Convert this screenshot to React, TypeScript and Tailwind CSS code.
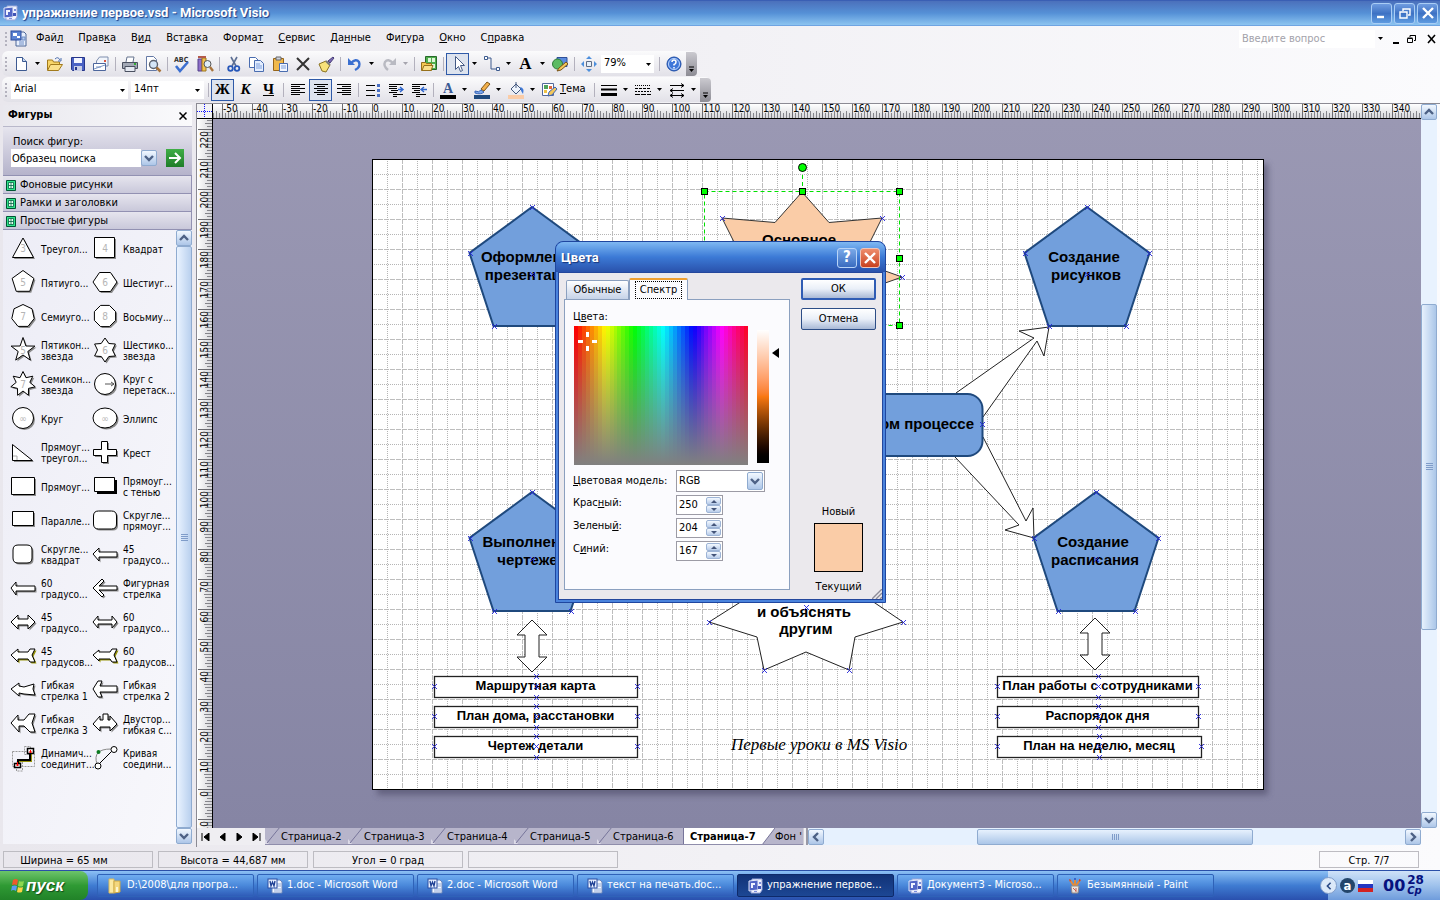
import React from 'react';

/* ---------- small helpers ---------- */

// "Фай_л" -> underline the letter after the underscore
const Hot = ({ t }: { t: string }) => {
  const i = t.indexOf('_');
  if (i < 0) return <>{t}</>;
  return (
    <span>
      {t.slice(0, i)}
      <u className="underline-offset-1">{t[i + 1]}</u>
      {t.slice(i + 2)}
    </span>
  );
};

const Grip = () => (
  <span className="flex w-[9px] shrink-0 flex-col items-center gap-[2px] pl-[2px]">
    {[0, 1, 2, 3].map((n) => (
      <i key={n} className="h-[2px] w-[2px] bg-[#b4b2be]" />
    ))}
  </span>
);

const Sep = () => (
  <span className="flex w-[6px] shrink-0 justify-center">
    <i className="h-[14px] w-px bg-[#b3b1bd]" />
  </span>
);

const Drop = ({ label, off }: { label: string; off?: boolean }) => (
  <button aria-label={label} className="flex h-[22px] w-[11px] shrink-0 items-center justify-center">
    <svg width="5" height="3" viewBox="0 0 5 3">
      <path d="M0 0h5L2.5 3z" fill={off ? '#a5a4ad' : '#000'} />
    </svg>
  </button>
);

const Chevron = ({ dir = 'down' }: { dir?: 'down' | 'up' | 'left' | 'right' }) => {
  const d = {
    down: 'M1 3l4 4 4-4',
    up: 'M1 7l4-4 4 4',
    left: 'M7 1L3 5l4 4',
    right: 'M3 1l4 4-4 4',
  }[dir];
  return (
    <svg width="10" height="10" viewBox="0 0 10 10" fill="none" stroke="#4d6185" strokeWidth="2.4">
      <path d={d} />
    </svg>
  );
};

const ScrollButton = ({ dir }: { dir: 'down' | 'up' | 'left' | 'right' }) => (
  <button
    aria-label={'Прокрутка ' + dir}
    className="flex h-[16px] w-[16px] shrink-0 items-center justify-center rounded-xs border border-[#8fabd0] bg-linear-to-b from-[#f2f8ff] to-[#adc6e8]"
  >
    <Chevron dir={dir} />
  </button>
);

const Tool = ({ label, on, children }: { label: string; on?: boolean; children: React.ReactNode }) => (
  <button
    aria-label={label}
    className={
      'flex h-[22px] w-[23px] shrink-0 items-center justify-center ' +
      (on ? 'border border-[#2f5aa8] bg-[#dde3ee]' : '')
    }
  >
    {children}
  </button>
);

const I = ({ children, s = 18 }: { children: React.ReactNode; s?: number }) => (
  <svg width={s} height={s} viewBox="0 0 18 18" fill="none">
    {children}
  </svg>
);

/* ---------- application icons ---------- */

const VisioIcon = () => (
  <svg width="16" height="16" viewBox="0 0 16 16" className="shrink-0">
    <path d="M5 1h10v11l-2 3H4z" fill="#f3f5fd" stroke="#9aa7da" />
    <path d="M2 3l9-1v10l-9 1z" fill="#5165c6" stroke="#e3e8fb" />
    <path d="M4 5h4v5H4z" fill="#eef1ff" />
    <path d="M6 7h3v3H6z" fill="#5165c6" />
    <path d="M11 8h3v3h-3z" fill="#4053b5" />
    <path d="M12 4h2v2h-2zM7 13h3v1H7z" fill="#7e8edb" />
  </svg>
);

const WordIcon = () => (
  <svg width="16" height="16" viewBox="0 0 16 16" className="shrink-0">
    <path d="M5 2h8l2 2v11H5z" fill="#f4f8ff" stroke="#6b87bd" />
    <path d="M10 6h4M10 8h4M7 11h7M7 13h7" stroke="#8fa9d8" />
    <rect x="1" y="1" width="9" height="9" fill="#e9f0ff" stroke="#2a4fa3" />
    <path d="M3 3l1 5 1.500-4L7 8l1-5" stroke="#1d3f94" strokeWidth="1.300" fill="none" />
  </svg>
);

const FolderIcon = () => (
  <svg width="16" height="16" viewBox="0 0 16 16" className="shrink-0">
    <path d="M2 1h5v14H2z" fill="#fbe9a2" stroke="#d9b95a" />
    <path d="M7 3h6v11l-6 1z" fill="#f3d77e" stroke="#cfaa45" />
    <path d="M9 9h2v5H9z" fill="#fdf6d0" />
  </svg>
);

const PaintIcon = () => (
  <svg width="16" height="16" viewBox="0 0 16 16" className="shrink-0">
    <path d="M7 8L3 2M8 8V1M9 8l4-6" stroke="#e08b3d" strokeWidth="2" />
    <path d="M2 1l2 1-1 2zM12 1l2 1-2 2z" fill="#d0402e" />
    <path d="M7 0h2v2H7z" fill="#3a65c9" />
    <path d="M4 8h8l-1 7H5z" fill="#e9e4e0" stroke="#938b86" />
    <path d="M6 10l3 3M9 10v4" stroke="#c65b4d" />
  </svg>
);

/* ---------- data ---------- */

const menu = ['Фай_л', 'Прав_ка', 'В_ид', 'Вст_авка', 'Форма_т', '_Сервис', 'Да_нные', 'Фи_гура', '_Окно', 'С_правка'];

const poly = (n: number, r: number, turn = -90, cx = 13, cy = 13) =>
  'M' +
  Array.from({ length: n }, (_, i) => {
    const a = ((turn + (360 / n) * i) * Math.PI) / 180;
    return `${(cx + r * Math.cos(a)).toFixed(1)} ${(cy + r * Math.sin(a)).toFixed(1)}`;
  }).join('L') +
  'z';

const star = (n: number, r: number, q: number) =>
  'M' +
  Array.from({ length: n * 2 }, (_, i) => {
    const a = ((-90 + (180 / n) * i) * Math.PI) / 180;
    const k = i % 2 ? q : r;
    return `${(13 + k * Math.cos(a)).toFixed(1)} ${(13 + k * Math.sin(a)).toFixed(1)}`;
  }).join('L') +
  'z';

const circle = 'M2.500 13a10.500 10.500 0 1 0 21 0a10.500 10.500 0 1 0-21 0z';

interface Shape {
  name: string[];
  d: string;
  mark?: string;
  shadow?: string;
  extra?: React.ReactNode;
}

const shapes: Shape[] = [
  { name: ['Треугол...'], d: 'M13 3L23.500 22.500H2.500z', mark: '3' },
  { name: ['Квадрат'], d: 'M2.500 2.500h20v20h-20z', mark: '4' },
  { name: ['Пятиуго...'], d: poly(5, 11.5), mark: '5' },
  { name: ['Шестиуг...'], d: 'M7.500 3.500h11L25 13l-6.500 9.500h-11L1 13z', mark: '6' },
  { name: ['Семиуго...'], d: poly(7, 11.5), mark: '7' },
  { name: ['Восьмиу...'], d: poly(8, 11.5, 22.5), mark: '8' },
  { name: ['Пятикон...', 'звезда'], d: star(5, 12.5, 5), mark: '5' },
  { name: ['Шестико...', 'звезда'], d: star(6, 12, 7.5), mark: '6' },
  { name: ['Семикон...', 'звезда'], d: star(7, 12.5, 7), mark: '7' },
  { name: ['Круг с', 'перетаск...'], d: circle, extra: <path d="M13 13h9M19 11l3 2-3 2" stroke="#555" fill="none" /> },
  { name: ['Круг'], d: circle, mark: '∞' },
  { name: ['Эллипс'], d: 'M1 13a12 10 0 1 0 24 0a12 10 0 1 0-24 0z', mark: '∞' },
  { name: ['Прямоуг...', 'треугол...'], d: 'M2.500 5.500v16h20z', extra: <path d="M3 17h4v4" stroke="#aaa" fill="none" /> },
  { name: ['Крест'], d: 'M9.500 2.500h6v8h9v6h-9v7h-6v-7h-8v-6h8z' },
  { name: ['Прямоуг...'], d: 'M1.500 4.500h23v17h-23z' },
  { name: ['Прямоуг...', 'с тенью'], d: 'M2.500 4.500h20v14h-20z', shadow: '#000' },
  { name: ['Паралле...'], d: 'M2.500 4.500h21v14h-21z' },
  { name: ['Скругле...', 'прямоуг...'], d: 'M6.500 4h13q5 0 5 5v8q0 5-5 5h-13q-5 0-5-5v-8q0-5 5-5z' },
  { name: ['Скругле...', 'квадрат'], d: 'M8 4h9q5 0 5 5v8q0 5-5 5h-9q-5 0-5-5v-8q0-5 5-5z' },
  { name: ['45', 'градусо...'], d: 'M1 13l6-6v4h18v5H7v4z' },
  { name: ['60', 'градусо...'], d: 'M1 13l5-6v4h19v5H6v4z' },
  { name: ['Фигурная', 'стрелка'], d: 'M1 13l9-9 2 2-5 5h18v4H7l5 5-2 2z' },
  { name: ['45', 'градусо...'], d: 'M1 13l7-7v4h10V6l7 7-7 7v-4H8v4z' },
  { name: ['60', 'градусо...'], d: 'M1 13l5-6v4h14V7l5 6-5 6v-4H6v4z' },
  { name: ['45', 'градусов...'], d: 'M1 12l7-6v3h10l2-3h5l-3 6 3 7h-5l-2-3H8v3z', shadow: '#98950c' },
  { name: ['60', 'градусов...'], d: 'M1 12l6-5v2h11l2-3h5l-3 6 3 7h-5l-2-3H7v2z', shadow: '#98950c' },
  { name: ['Гибкая', 'стрелка 1'], d: 'M1 12l8-6v3l5 1 10-3-1 5 2 6-11-1-5-1v3z' },
  { name: ['Гибкая', 'стрелка 2'], d: 'M1 12l5-8h4l-2 5h17v6H8l2 5H6z' },
  { name: ['Гибкая', 'стрелка 3'], d: 'M1 12l7-8v5h6l5-6h6l-3 9 3 9h-5l-6-6H9v6z' },
  { name: ['Двустор...', 'гибкая с...'], d: 'M1 13l7-8v4h3V3h5v6h2V5l7 8-7 7v-4H8v4z' },
  {
    name: ['Динамич...', 'соединит...'],
    d: '',
    extra: (
      <>
        <path d="M2.500 6.500h22v15h-22zM14.500 1.500h6v8h-6zM6.500 17h6v9h-6z" fill="none" stroke="#999" strokeDasharray="2 1" />
        <path d="M9 20v-4h12V8" stroke="#98950c" strokeWidth="2" fill="none" />
        <path d="M8 19v-4h12V8" stroke="#000" strokeWidth="2" fill="none" />
        <path d="M17.500 3.500h6v5h-6zM4.500 18.500h6v4h-6z" fill="#fff" stroke="#000" strokeWidth="1.500" />
        <path d="M19 7h3M20.500 5v3M6 20h3M7.500 17v4" stroke="#f00" />
      </>
    ),
  },
  {
    name: ['Кривая', 'соедини...'],
    d: '',
    extra: (
      <>
        <path d="M5 19Q0 4 19 4" fill="none" stroke="#888" />
        <path d="M7 19L20 6" stroke="#000" />
        <circle cx="22" cy="4.500" r="3" fill="#fff" stroke="#000" />
        <circle cx="6" cy="21" r="3" fill="#fff" stroke="#000" />
        <circle cx="6.500" cy="7" r="2" fill="#0a7a20" />
      </>
    ),
  },
];

const ShapeIcon = ({ s }: { s: Shape }) => (
  <svg width="28" height="28" viewBox="0 0 28 28" className="shrink-0">
    {s.d && (
      <path
        d={s.d}
        transform={s.shadow === '#000' ? 'translate(2.500 2.500)' : 'translate(1.500 1.500)'}
        fill={s.shadow ?? '#8b8b8b'}
      />
    )}
    {s.d && <path d={s.d} fill="#fff" stroke="#000" />}
    {s.mark && (
      <text x="13" y="17" textAnchor="middle" fontSize="10" fill="#b5b5b5">
        {s.mark}
      </text>
    )}
    {s.extra}
  </svg>
);

/* ---------- bars ---------- */

const TitleBar = () => (
  <header className="flex h-[26px] shrink-0 items-center gap-[4px] border-t border-b border-t-[#3a5fb4] border-b-[#6fa4e2] bg-linear-to-b from-[#4b70bb] via-[#5590d6] to-[#8cc4f0] px-[2px]">
    <VisioIcon />
    <h1 className="flex-1 font-['Roboto',sans-serif] text-[13px] font-bold text-white [text-shadow:1px_1px_1px_#1c3c86]">
      упражнение первое.vsd - Microsoft Visio
    </h1>
    <div className="flex gap-[2px]">
      {['M4 13h7', 'M4 8h7v6H4zM7 7V5h7v6h-2', 'M4 4l10 10M14 4L4 14'].map((d, i) => (
        <button
          key={d}
          aria-label={['Свернуть', 'Восстановить', 'Закрыть'][i]}
          className="flex h-[21px] w-[21px] items-center justify-center rounded-[3px] border border-[#a9cdf5] bg-linear-to-b from-[#6f9ce0] via-[#3e72c4] to-[#5e9be0]"
        >
          <I>
            <path d={d} stroke="#fff" strokeWidth={i === 1 ? 1.4 : 2.4} />
          </I>
        </button>
      ))}
    </div>
  </header>
);

const MenuBar = () => (
  <nav className="flex h-[25px] shrink-0 items-center">
    <Grip />
    <span className="mr-px flex w-[19px] justify-center">
      <svg width="17" height="17" viewBox="0 0 17 17">
        <path d="M6 2h8l2 2v12H6z" fill="#e8effc" stroke="#4c6698" />
        <path d="M9 12h5M9 14h5M12 7h3v3h-3z" stroke="#6d8cc6" fill="#b9cdf0" />
        <rect x="1" y="1" width="10" height="9" fill="#5c83d3" stroke="#2c4d9c" />
        <path d="M3 3h4v3H3zM7 6h3v2H7z" fill="#fff" />
      </svg>
    </span>
    <div className="flex gap-px">
      {menu.map((m) => (
        <button key={m} className="px-[7px] whitespace-nowrap">
          <Hot t={m} />
        </button>
      ))}
    </div>
    <div className="ml-auto flex items-center">
      <input
        aria-label="Введите вопрос"
        placeholder="Введите вопрос"
        className="h-[18px] w-[136px] bg-white px-[3px] placeholder:text-[#a3a2aa]"
      />
      <Drop label="Вопросы" />
      <div className="flex gap-[4px] pl-[4px]">
        <button aria-label="Свернуть окно" className="w-[12px]">
          <svg width="12" height="10" viewBox="0 0 12 10"><path d="M3 9h6" stroke="#000" strokeWidth="2" /></svg>
        </button>
        <button aria-label="Восстановить окно" className="w-[12px]">
          <svg width="12" height="10" viewBox="0 0 12 10" fill="none" stroke="#000"><path d="M1.500 4.500h5v4h-5zM1.500 4h5M4 3V1.500h5.500v5H8M4 1.500h5.500" /></svg>
        </button>
        <button aria-label="Закрыть окно" className="w-[18px] pl-[4px]">
          <svg width="12" height="10" viewBox="0 0 12 10"><path d="M2 1l7 8M9 1L2 9" stroke="#000" strokeWidth="1.600" /></svg>
        </button>
      </div>
    </div>
  </nav>
);

const BarEnd = () => (
  <button aria-label="Параметры панели" className="ml-px flex h-[24px] w-[11px] items-end justify-center rounded-r-sm bg-linear-to-b from-[#cbcad0] to-[#8d8c94] pb-[3px]">
    <svg width="7" height="7" viewBox="0 0 7 7"><path d="M1 1h5" stroke="#000" /><path d="M1 3h5L3.500 6z" /></svg>
  </button>
);

const bar = 'flex h-[25px] w-max shrink-0 items-center rounded-md bg-linear-to-b from-[#fbfbfc] to-[#e2e1e8] ml-[2px] -mr-[2px]';

const StandardBar = () => (
  <div role="toolbar" aria-label="Стандартная" className={bar}>
    <span className="-ml-[2px] flex"><Grip /></span>
    <Tool label="Создать">
      <I><path d="M4.500 2.500h6l4 4v9h-10z" fill="#fff" stroke="#3d5a91" /><path d="M10.500 2.500v4h4" fill="#c7d8f2" stroke="#3d5a91" /></I>
    </Tool>
    <Drop label="Создать: список" />
    <Tool label="Открыть">
      <I><path d="M1.500 15V5h5l1 2h6v3" fill="#f8d568" stroke="#a27a1c" /><path d="M1.500 15.500l3-6h12l-4 6z" fill="#fbe08a" stroke="#a27a1c" /><path d="M9 4q3-3 5 1m1-2v3h-3" stroke="#4d6fae" /></I>
    </Tool>
    <Tool label="Сохранить">
      <I><path d="M2.500 2.500h13v13h-12l-1-1z" fill="#4a62c4" stroke="#27368a" /><path d="M5 3h8v5H5z" fill="#f3f5ff" /><path d="M5 11h8v5H5z" fill="#c9cee6" /><path d="M6 12h2v3H6z" fill="#27368a" /></I>
    </Tool>
    <Tool label="Сообщение">
      <I><path d="M4.500 9V6l3-4h8.500v9h-2" fill="#f2f5fb" stroke="#7f8fae" /><path d="M1.500 8.500h12v7h-12z" fill="#fff" stroke="#4d669c" /><path d="M2 14l11-4M4 12h5" stroke="#7d96c4" /><path d="M12 5h2v2h-2z" fill="#d8563f" /></I>
    </Tool>
    <Sep />
    <Tool label="Печать">
      <I><path d="M5 7l1-5h7l-1 5" fill="#fff" stroke="#66748f" /><path d="M1.500 7.500h15v6h-15z" fill="#a3a9b6" stroke="#4a5060" /><path d="M4 11.500h10v5H4z" fill="#e5e9f2" stroke="#4a5060" /><path d="M13 9h2" stroke="#3a3" strokeWidth="2" /></I>
    </Tool>
    <Tool label="Просмотр">
      <I><path d="M2.500 1.500h7l3 3v11h-10z" fill="#fff" stroke="#6479a5" /><circle cx="9.500" cy="9.500" r="4" fill="#d5e6f8" stroke="#5b6270" strokeWidth="1.400" /><path d="M12.500 12.500l4 4" stroke="#a8733a" strokeWidth="2.500" /></I>
    </Tool>
    <Sep />
    <Tool label="Орфография">
      <I><text x="1" y="7" fontSize="7" fontWeight="700" fill="#333">ABC</text><path d="M3 11l4 5 8-9" stroke="#3c6fd0" strokeWidth="2.600" /></I>
    </Tool>
    <Tool label="Справочные материалы">
      <I><path d="M2 4h4v12H2z" fill="#8f6fc9" stroke="#53408a" /><path d="M6 3h4v13H6z" fill="#f2c14e" stroke="#9d7420" /><path d="M2 2h8" stroke="#b35a4b" strokeWidth="2" /><circle cx="11.500" cy="9" r="3.500" fill="#e0edf9" stroke="#555" /><path d="M14 12l3 4" stroke="#a8733a" strokeWidth="2.400" /></I>
    </Tool>
    <Sep />
    <Tool label="Вырезать">
      <I><path d="M6 2l5 9M12 2L7 11" stroke="#5d6f93" strokeWidth="1.600" /><circle cx="5.500" cy="13.500" r="2.300" stroke="#2757b8" strokeWidth="1.800" /><circle cx="12" cy="13.500" r="2.300" stroke="#2757b8" strokeWidth="1.800" /></I>
    </Tool>
    <Tool label="Копировать">
      <I><path d="M1.500 2.500h6l3 3v7h-9z" fill="#fff" stroke="#4a6db0" /><path d="M6.500 5.500h6l3 3v8h-9z" fill="#e4eeff" stroke="#4a6db0" /><path d="M8 9h4M8 11h6M8 13h6" stroke="#7fa0dc" /></I>
    </Tool>
    <Tool label="Вставить">
      <I><path d="M2.500 3.500h10v12h-10z" fill="#f0b94c" stroke="#96651a" /><path d="M5 2h5v3H5z" fill="#cfd3dc" stroke="#666" /><path d="M8.500 8.500h8v8h-8z" fill="#f2f6ff" stroke="#4a6db0" /><path d="M10 11h5M10 13h5" stroke="#7fa0dc" /></I>
    </Tool>
    <Tool label="Удалить">
      <I><path d="M3 3l12 12M15 3L3 15" stroke="#333" strokeWidth="2" /></I>
    </Tool>
    <Tool label="Формат по образцу">
      <I><path d="M11 6l5-4 1 1-4 5z" fill="#7c6bb8" stroke="#4a3f77" /><path d="M2 9l7-3 4 4-4 7-4-1z" fill="#f8e27a" stroke="#8a7222" /><path d="M9 6l4 4" stroke="#777" strokeWidth="2" /></I>
    </Tool>
    <Sep />
    <Tool label="Отменить">
      <I><path d="M5 8q5-5 8-1 2 5-4 8" stroke="#3a6fd0" strokeWidth="2.400" /><path d="M2 3v7h7z" fill="#3a6fd0" /></I>
    </Tool>
    <Drop label="Отменить: список" />
    <Tool label="Вернуть">
      <I><path d="M13 8Q8 3 5 7q-2 4 3 8" stroke="#b9bac2" strokeWidth="2.400" /><path d="M16 3v7H9z" fill="#b9bac2" /></I>
    </Tool>
    <Drop label="Вернуть: список" off />
    <Sep />
    <Tool label="Фигуры">
      <I><path d="M5.500 1.500h11v13h-11z" fill="#4fae4c" stroke="#27692a" /><path d="M8 3h3v4H8zM12 3h3v4h-3zM12 9h3v4h-3z" fill="#dff6d8" /><path d="M1.500 15.500v-8h4l1 1h5v7z" fill="#f5c851" stroke="#96701b" /><path d="M2 15.500l2-5h9l-2 5z" fill="#fbe08a" stroke="#96701b" /></I>
    </Tool>
    <Sep />
    <Tool label="Указатель" on>
      <I><path d="M6.500 1.500v13l3-3 2 5 2-1-2-5h4z" fill="#fff" stroke="#445a85" /></I>
    </Tool>
    <Drop label="Указатель: список" />
    <Tool label="Соединительная линия">
      <I><path d="M3 3h5v11h7" stroke="#3c5a8e" /><path d="M1.500 1.500h3v3h-3zM13.500 12.500h3v3h-3z" fill="#fff" stroke="#3c5a8e" /></I>
    </Tool>
    <Drop label="Линия: список" />
    <Tool label="Текст">
      <span className="font-['Liberation_Serif',serif] text-[17px] leading-none font-bold">A</span>
    </Tool>
    <Drop label="Текст: список" />
    <Tool label="Рисование">
      <I><path d="M6 2.500h10v9H6z" fill="#5b8be0" stroke="#2e4f97" /><circle cx="6.500" cy="9" r="5" fill="#5dbb63" stroke="#2f7a38" /><path d="M6 16l2-3 7-6 2 2-7 6z" fill="#f3c75a" stroke="#7a5518" /></I>
    </Tool>
    <Sep />
    <Tool label="Панорама">
      <I><path d="M6.500 6.500h5v5h-5z" fill="#e5f0fb" stroke="#5f6d85" /><path d="M9 1l3 3H6zM9 17l3-3H6zM1 9l3-3v6zM17 9l-3-3v6z" fill="#4d8fdc" /></I>
    </Tool>
    <label className="relative ml-px block h-[18px] w-[53px] bg-white">
      <select aria-label="Масштаб" className="h-full w-full appearance-none bg-transparent px-[3px]">
        <option>79%</option>
      </select>
      <span className="pointer-events-none absolute top-[8px] right-[3px]"><svg width="5" height="3"><path d="M0 0h5L2.500 3z" /></svg></span>
    </label>
    <span className="ml-[2px] flex"><Sep /></span>
    <Tool label="Справка">
      <I><circle cx="9" cy="9" r="7" fill="#3f77d9" stroke="#1d4ba3" /><circle cx="9" cy="9" r="5.500" stroke="#bcd5fb" /><path d="M7 7q0-2 2-2t2 2-2 2.500V10.500M9 12v1.500" stroke="#fff" strokeWidth="1.500" /></I>
    </Tool>
    <BarEnd />
  </div>
);

const lines = (a: number[][]) => a.map(([x1, x2], i) => <path key={i} d={`M${x1} ${3.5 + i * 2}H${x2}`} stroke="#000" />);

const FormatBar = () => (
  <div role="toolbar" aria-label="Форматирование" className={bar}>
    <span className="-ml-[2px] flex"><Grip /></span>
    <label className="relative ml-[2px] block h-[18px] w-[117px] bg-white">
      <select aria-label="Шрифт" className="h-full w-full appearance-none bg-transparent px-[3px]">
        <option>Arial</option>
      </select>
      <span className="pointer-events-none absolute top-[8px] right-[3px]"><svg width="5" height="3"><path d="M0 0h5L2.500 3z" /></svg></span>
    </label>
    <label className="relative ml-[3px] block h-[18px] w-[73px] bg-white">
      <select aria-label="Размер шрифта" className="h-full w-full appearance-none bg-transparent px-[3px]">
        <option>14пт</option>
      </select>
      <span className="pointer-events-none absolute top-[8px] right-[4px]"><svg width="5" height="3"><path d="M0 0h5L2.500 3z" /></svg></span>
    </label>
    <span className="ml-px flex"><Sep /></span>
    <Tool label="Полужирный" on>
      <b className="font-['Liberation_Serif',serif] text-[15px] leading-none">Ж</b>
    </Tool>
    <Tool label="Курсив">
      <b className="font-['Liberation_Serif',serif] text-[15px] leading-none italic">К</b>
    </Tool>
    <Tool label="Подчеркнутый">
      <b className="font-['Liberation_Serif',serif] text-[15px] leading-none underline">Ч</b>
    </Tool>
    <Sep />
    <Tool label="По левому краю"><I>{lines([[2, 16], [2, 11], [2, 16], [2, 11], [2, 16], [2, 11]])}</I></Tool>
    <Tool label="По центру" on><I>{lines([[2, 16], [5, 13], [2, 16], [5, 13], [2, 16], [5, 13]])}</I></Tool>
    <Tool label="По правому краю"><I>{lines([[2, 16], [7, 16], [2, 16], [7, 16], [2, 16], [7, 16]])}</I></Tool>
    <Sep />
    <Tool label="Маркеры"><I><path d="M2 4.500h9M2 9.500h9M2 14.500h9" stroke="#000" /><path d="M13 3h3v3h-3zM13 8h3v3h-3zM13 13h3v3h-3z" fill="#4a70c4" /></I></Tool>
    <Tool label="Уменьшить отступ"><I><path d="M2 3.500h14M2 5.500h8M2 7.500h8M4 9.500h7M2 11.500h8M6 13.500h10M6 15.500h4" stroke="#000" /><path d="M11 8.500h5M13 6l3 2.500-3 2.500" stroke="#2f66cc" strokeWidth="1.400" /></I></Tool>
    <Tool label="Увеличить отступ"><I><path d="M2 3.500h14M2 5.500h8M2 7.500h8M4 9.500h6M2 11.500h8M6 13.500h10M6 15.500h4" stroke="#000" /><path d="M17 8.500h-5M14 6l-3 2.500 3 2.500" stroke="#2f66cc" strokeWidth="1.400" /></I></Tool>
    <Sep />
    <Tool label="Цвет текста"><I><text x="9" y="12" textAnchor="middle" fontSize="14" fontWeight="700" fontFamily="Liberation Serif" fill="#3a5a94">A</text><path d="M1 14h16v4H1z" fill="#000" /></I></Tool>
    <Drop label="Цвет текста: список" />
    <Tool label="Цвет линии"><I><path d="M2 10q4 2 6-1l3 2q-3 3-9 1z" fill="#7ba7ea" stroke="#3764b8" /><path d="M8 8l6-7 3 2-6 7z" fill="#f4b04a" stroke="#7c5518" /><path d="M1 14h16v4H1z" fill="#1f497d" /></I></Tool>
    <Drop label="Цвет линии: список" />
    <Tool label="Цвет заливки"><I><path d="M4 8l5-5 5 5-5 5z" fill="#edf3fc" stroke="#44597f" /><path d="M9 1v6" stroke="#44597f" /><path d="M13 6q5 1 3 7-2-2-3-7z" fill="#3d78d8" /><path d="M1 14h16v4H1z" fill="#facca7" /></I></Tool>
    <Drop label="Цвет заливки: список" />
    <button className="flex h-[22px] w-[53px] items-center gap-[2px] pl-[2px]">
      <I><path d="M2.500 2.500h11v12h-11z" fill="#fff" stroke="#53699a" /><path d="M4 4h4v4H4z" fill="#4fa35a" /><path d="M9 5h3v3H9z" fill="#e06a3c" /><path d="M4 9h3v3H4z" fill="#f0c344" /><path d="M8 15l1-4 6-5 2 2-5 6z" fill="#f3c75a" stroke="#3d64b4" /></I>
      <Hot t="_Тема" />
    </button>
    <Sep />
    <Tool label="Толщина линии"><I><path d="M1 4.500h16" stroke="#000" /><path d="M1 8.500h16" stroke="#000" strokeWidth="2" /><path d="M1 13.500h16" stroke="#000" strokeWidth="3" /></I></Tool>
    <Drop label="Толщина: список" />
    <Tool label="Тип линии"><I><path d="M1 4.500h16" stroke="#000" strokeDasharray="1 1" /><path d="M1 7.500h16" stroke="#000" strokeDasharray="3 1" /><path d="M1 10.500h16" stroke="#000" strokeDasharray="2 1" /><path d="M1 13.500h16" stroke="#000" strokeDasharray="5 1" /></I></Tool>
    <Drop label="Тип линии: список" />
    <Tool label="Концы линии"><I><path d="M2 4.500h14M13 2.500l3 2-3 2M2 9.500h14M5 7.500l-3 2 3 2M2 14.500h14M5 12.500l-3 2 3 2M13 12.500l3 2-3 2" stroke="#000" /></I></Tool>
    <Drop label="Концы: список" />
    <BarEnd />
  </div>
);

/* ---------- shapes pane ---------- */

const ShapesPane = () => (
  <aside className="flex w-[196px] shrink-0 flex-col py-[3px] pr-[4px] pl-[3px]">
    <div className="flex h-[21px] shrink-0 items-center justify-between bg-linear-to-r from-[#e9e8ee] to-[#fafafc] px-[5px]">
      <h2 className="font-bold">Фигуры</h2>
      <button aria-label="Закрыть панель">
        <svg width="8" height="8" viewBox="0 0 8 8"><path d="M.500.500l7 7M7.500.500l-7 7" stroke="#000" strokeWidth="1.500" /></svg>
      </button>
    </div>
    <div className="h-[49px] shrink-0 border-t border-[#b9b8ca] bg-linear-to-b from-[#e6e5ee] to-[#b5b3cb] pt-[8px] pl-[8px]">
      <label htmlFor="find" className="block pl-[2px] leading-[14px]">Поиск фигур:</label>
      <div className="flex h-[18px] items-center">
        <input id="find" defaultValue="Образец поиска" className="h-full w-[130px] bg-white px-px" />
        <ScrollButton dir="down" />
        <button aria-label="Найти" className="ml-[9px] flex h-[18px] w-[18px] items-center justify-center bg-linear-to-b from-[#3fae46] to-[#1d7d28]">
          <svg width="14" height="14" viewBox="0 0 14 14" fill="none" stroke="#fff" strokeWidth="2"><path d="M1 7h11M7 2l5 5-5 5" /></svg>
        </button>
      </div>
    </div>
    {['Фоновые рисунки', 'Рамки и заголовки', 'Простые фигуры'].map((t) => (
      <button key={t} className="flex h-[18px] shrink-0 items-center gap-[4px] border-t border-r border-[#9291b2] bg-linear-to-b from-[#e6e5ee] to-[#c9c8da] pt-px pl-[3px]">
        <svg width="10" height="11" viewBox="0 0 10 11"><path d="M.500.500h9v10h-9z" fill="#2fe58a" stroke="#053" /><path d="M2.500 2.500h5v6h-5z" fill="#e5ffef" /><path d="M2.500 2.500h5v6h-5zM5 2.500v6M2.500 5.500h5" stroke="#064" strokeWidth=".800" fill="none" /></svg>
        {t}
      </button>
    ))}
    <div className="flex min-h-0 flex-1 border-t border-[#9291b2] bg-linear-to-br from-[#ededf6] to-[#f8f8fc]">
      <ul className="grid flex-1 auto-rows-[34px] grid-cols-[82px_1fr] content-start pt-[2px] pl-[7px] text-[10px] leading-[11px]">
        {shapes.map((s, i) => (
          <li key={i} className="flex min-w-0 items-center gap-[3px] whitespace-nowrap">
            <ShapeIcon s={s} />
            <span>
              {s.name.map((n) => (
                <span key={n} className="block">{n}</span>
              ))}
            </span>
          </li>
        ))}
      </ul>
      <div className="flex w-[16px] shrink-0 flex-col bg-[#eef5ff]">
        <ScrollButton dir="up" />
        <div className="flex flex-1 flex-col items-center justify-center gap-px rounded-xs border border-[#8fabd0] bg-linear-to-r from-[#eaf3ff] to-[#b9d0ee]">
          {[0, 1, 2, 3].map((n) => <i key={n} className="h-px w-[7px] bg-[#7f9cc9]" />)}
        </div>
        <ScrollButton dir="down" />
      </div>
    </div>
  </aside>
);

/* ---------- rulers and page ---------- */

const tick = (k: number) => (k % 10 === 0 ? 15 : k % 5 === 0 ? 9 : k % 2 === 0 ? 8 : 6);

const TopRuler = () => (
  <svg className="block h-full w-full bg-linear-to-b from-white to-[#d4d4d8]">
    <g transform="translate(-213 -104)">
      {Array.from({ length: 404 }, (_, i) => i - 53).map((k) => (
        <path key={k} d={`M${372.5 + k * 3} ${119 - tick(k)}V119`} stroke={k % 10 ? '#85858b' : '#6b6b70'} />
      ))}
      {Array.from({ length: 40 }, (_, i) => i - 5).map((n) => (
        <text key={n} x={373 + n * 30} y="112" fontSize="10">{n * 10}</text>
      ))}
      <path d="M213 118.500h1300" stroke="#000" />
    </g>
  </svg>
);

const SideRuler = () => (
  <svg className="block h-full w-full bg-linear-to-r from-white to-[#d4d4d8]">
    <g transform="translate(-197 -119)">
      {Array.from({ length: 240 }, (_, i) => i - 15).map((k) => (
        <path key={k} d={`M${213 - tick(k)} ${789.5 - k * 3}H213`} stroke={k % 10 ? '#85858b' : '#6b6b70'} />
      ))}
      {Array.from({ length: 24 }, (_, i) => i - 1).map((n) => (
        <text key={n} transform={`translate(208 ${791 - n * 30}) rotate(-90)`} textAnchor="end" fontSize="10">{n * 10}</text>
      ))}
      <path d="M212.500 119v900" stroke="#000" />
    </g>
  </svg>
);

const Pentagon = ({ x, y }: { x: number; y: number }) => (
  <path
    d={`M${x} ${y}l62.500 46l-24 73h-77l-24-73z`}
    fill="#729fdc"
    stroke="#1f497d"
    strokeWidth="2"
  />
);

const marks = (x: number, y: number): number[][] => [
  [x, y], [x - 62, y + 46], [x + 62, y + 46], [x - 38, y + 119], [x + 39, y + 119], [x, y + 67],
];

const boxes: [number, number, number, string][] = [
  [434, 676, 203, 'Маршрутная карта'],
  [434, 706, 203, 'План дома, расстановки'],
  [434, 736, 203, 'Чертеж детали'],
  [997, 676, 201, 'План работы с сотрудниками'],
  [997, 706, 201, 'Распорядок дня'],
  [997, 736, 204, 'План на неделю, месяц'],
];

const points: number[][] = [
  ...marks(532, 207), ...marks(532, 492), ...marks(1087, 207), ...marks(1096, 492),
  [722, 218], [882, 218], [902, 277], [982, 424], [806, 607], [709, 622], [903, 622], [764, 670], [849, 670],
  ...boxes.flatMap(([x, y, w]) => {
    const m = x + (x < 900 ? 102 : Math.round(w / 2));
    return [[x, y + 10], [x + w, y + 10], [m, y], [m, y + 10], [m, y + 21]];
  }),
];

const DoubleArrow = ({ x, y }: { x: number; y: number }) => (
  <path d={`M${x} ${y}l15 15h-8v22h8l-15 15l-15-15h8v-22h-8z`} fill="#fff" stroke="#222" />
);

const labels: [number, number, string][] = [
  [530, 262, 'Оформление'], [532, 280, 'презентации'],
  [1084, 262, 'Создание'], [1086, 280, 'рисунков'],
  [530, 547, 'Выполнение'], [532, 565, 'чертежей'],
  [1093, 547, 'Создание'], [1095, 565, 'расписания'],
  [799, 245, 'Основное'],
  [804, 617, 'и объяснять'], [806, 634, 'другим'],
];

const Drawing = () => (
  <svg className="block h-full w-full" role="img" aria-label="Страница-7">
    <defs>
      <pattern id="grid" width="30" height="30" patternUnits="userSpaceOnUse" x="372" y="159">
        <path d="M.500 0v30M0 .500h30" stroke="#bdbdbd" strokeDasharray="5 1" />
        <path d="M15.500 0v30M0 15.500h30" stroke="#b5b5b5" strokeDasharray="1 1" />
      </pattern>
      <filter id="soft" x="-5%" y="-5%" width="110%" height="110%"><feGaussianBlur stdDeviation="3" /></filter>
    </defs>
    <g transform="translate(-213 -119)" fontFamily="Liberation Sans, sans-serif">
      <rect x="377" y="164" width="891" height="631" fill="#4b4a66" opacity=".6" filter="url(#soft)" />
      <rect x="372.500" y="159.500" width="891" height="630" fill="#fff" />
      <rect x="372.500" y="159.500" width="891" height="630" fill="url(#grid)" stroke="#000" />

      <path d="M956 393L1034 338L1019 331L1049 327L1044 356L1037 341L983 417z" fill="#fff" stroke="#222" />
      <path d="M955 457L1019 525L1005 530L1034 538L1033 508L1026 521L983 437z" fill="#fff" stroke="#222" />
      <rect x="640" y="394" width="342.500" height="62" rx="15" fill="#729fdc" stroke="#1f497d" strokeWidth="2" />

      <Pentagon x={532} y={207} />
      <Pentagon x={532} y={492} />
      <Pentagon x={1087} y={207} />
      <Pentagon x={1096} y={492} />

      <path d="M802 192L829 222.500L882 218L860 262L902 277L860 292L802 325L744 292L702 277L744 262L722 218L775 222.500z" fill="#facca7" stroke="#333" />
      <path d="M709 622L739 603L806 560L875 603L903 622L855 637L849 670L806 652L764 670L757 637z" fill="#fff" stroke="#222" />
      <DoubleArrow x={532} y={620} />
      <DoubleArrow x={1095} y={618} />

      {boxes.map(([x, y, w, t]) => (
        <g key={t}>
          <rect x={x + 0.5} y={y + 0.5} width={w} height="21" fill="#fff" stroke="#222" strokeWidth="1.300" />
          <text x={x + w / 2} y={y + 14} textAnchor="middle" fontSize="13" fontWeight="700">{t}</text>
        </g>
      ))}
      {labels.map(([x, y, t], i) => (
        <text key={i} x={x} y={y} textAnchor="middle" fontSize="15" fontWeight="700">{t}</text>
      ))}
      <text x="974" y="429" textAnchor="end" fontSize="15" fontWeight="700">в учебном процессе</text>
      <text x="731" y="750" fontSize="17" fontStyle="italic" fontFamily="Liberation Serif, serif">Первые уроки в MS Visio</text>

      {points.map(([x, y], i) => (
        <path key={i} d={`M${x - 2} ${y - 2}l5 5m0-5l-5 5`} stroke="#2222dd" strokeWidth=".900" />
      ))}
      <g stroke="#00e000" strokeDasharray="4 3" fill="none">
        <path d="M704.500 191.500H899.500V325.500H704.500zM802.500 168v23" />
      </g>
      {[[704, 191], [802, 191], [899, 191], [899, 258], [899, 325]].map(([x, y]) => (
        <rect key={`${x}-${y}`} x={x - 2.5} y={y - 2.5} width="6" height="6" fill="#0f0" stroke="#000" />
      ))}
      <circle cx="802.500" cy="167.500" r="4" fill="#0f0" stroke="#000" />
    </g>
  </svg>
);

const pages = ['Страница-2', 'Страница-3', 'Страница-4', 'Страница-5', 'Страница-6'];

const PageTabs = () => (
  <div className="col-span-2 flex min-w-0">
    <div className="flex w-[68px] shrink-0 items-center justify-around bg-[#efeef2]">
      {['M1 0v8M8 0v8L3 4z', 'M7 0v8L2 4z', 'M2 0v8l5-4z', 'M1 0v8l5-4zM8 0v8'].map((d, i) => (
        <button key={d} aria-label={['В начало', 'Назад', 'Вперед', 'В конец'][i]}>
          <svg width="9" height="8" viewBox="0 0 9 8"><path d={d} stroke="#000" /></svg>
        </button>
      ))}
    </div>
    <div className="flex w-[538px] shrink-0 overflow-hidden border-b border-[#8f8dab] bg-[#b7b5cb] leading-[18px]">
      {pages.map((p) => (
        <button key={p} className="flex w-[83px] shrink-0 items-end whitespace-nowrap">
          <svg width="16" height="17" viewBox="0 0 16 17" className="shrink-0" fill="none">
            <path d="M0 12L4 17H0z" fill="#dddbe8" /><path d="M2 16L15 0" stroke="#77759a" />
          </svg>
          <span className="h-[16px]">{p}</span>
        </button>
      ))}
      <button className="relative flex w-[95px] shrink-0 items-end pl-[10px] font-bold whitespace-nowrap">
        <svg width="92" height="17" viewBox="0 0 92 17" className="absolute top-0 left-[3px]"><path d="M0 0h92L79 17H0z" fill="#fff" /><path d="M.500 0v17M92 0L79 17" stroke="#77759a" /></svg>
        <span className="relative h-[16px]">Страница-7</span>
      </button>
      <button className="h-[16px] whitespace-nowrap">Фон '</button>
    </div>
    <div className="w-[5px] shrink-0 border-r-2 border-l border-r-[#9a99a5] border-l-[#cfced6] bg-[#f2f1f4]" />
    <div className="flex min-w-0 flex-1 items-center bg-[#e6f1fe]">
      <ScrollButton dir="left" />
      <div className="ml-[25%] flex h-[16px] w-[45%] items-center justify-center gap-px rounded-xs border border-[#8fabd0] bg-linear-to-b from-[#e7f1fd] to-[#abc6e8]">
        {[0, 1, 2, 3].map((n) => <i key={n} className="h-[6px] w-px bg-[#7f9cc9]" />)}
      </div>
      <span className="ml-auto flex"><ScrollButton dir="right" /></span>
    </div>
  </div>
);

const Work = () => (
  <main className="mt-px grid min-w-0 flex-1 grid-cols-[16px_1fr_16px] grid-rows-[15px_1fr_17px] border-t border-l border-[#8b8a93] pr-[3px] pb-[2px]">
    <svg width="16" height="15" viewBox="0 0 16 15" className="bg-[#f3f3f5]">
      <path d="M7.500 0v15M0 7.500h16" stroke="#11f" strokeDasharray="1 1" /><path d="M15.500 0v15M0 14.500h16" stroke="#000" />
    </svg>
    <div className="min-w-0 overflow-hidden"><TopRuler /></div>
    <div className="row-span-2 flex flex-col bg-[#e8f2fe]">
      <ScrollButton dir="up" />
      <div className="mt-[184px] flex h-[45%] flex-col items-center justify-center gap-px rounded-xs border border-[#8fabd0] bg-linear-to-r from-[#e7f1fd] to-[#abc6e8]">
        {[0, 1, 2, 3].map((n) => <i key={n} className="h-px w-[7px] bg-[#7f9cc9]" />)}
      </div>
      <span className="mt-auto flex"><ScrollButton dir="down" /></span>
    </div>
    <div className="min-h-0 overflow-hidden"><SideRuler /></div>
    <div className="min-h-0 min-w-0 overflow-hidden bg-linear-to-b from-[#9a98b3] to-[#8685a4]"><Drawing /></div>
    <PageTabs />
  </main>
);

/* ---------- colour dialog ---------- */

const columns = Array.from({ length: 44 }, (_, i) => Math.round((i / 43) * 350));

const channels: [string, string, number][] = [
  ['red', 'Крас_ный:', 250],
  ['green', 'Зелены_й:', 204],
  ['blue', 'С_иний:', 167],
];

const dialogButton = 'h-[22px] w-[75px] shrink-0 rounded-xs bg-linear-to-b from-white via-[#e9eff8] to-[#a9b9d6]';

const ColorDialog = () => (
  <section
    role="dialog"
    aria-label="Цвета"
    className="absolute top-[241px] left-[555px] w-[331px] rounded-t-lg border border-[#1f469f] bg-[#4a83dc]"
  >
    <div className="flex h-[30px] items-center gap-[2px] rounded-t-lg bg-linear-to-b from-[#7fb8f2] via-[#3c7ad6] to-[#2a52ac] pt-px pr-[5px] pl-[5px]">
      <h2 className="flex-1 font-['Roboto',sans-serif] text-[13px] font-bold text-white [text-shadow:1px_1px_1px_#16357c]">Цвета</h2>
      <button aria-label="Справка" className="h-[20px] w-[20px] rounded-[3px] border border-[#b8d4f8] bg-linear-to-b from-[#7aa9e8] to-[#3a6cc0] text-[15px] leading-none font-bold text-white">?</button>
      <button aria-label="Закрыть" className="ml-px flex h-[20px] w-[20px] items-center justify-center rounded-[3px] border border-[#f0c4b8] bg-linear-to-b from-[#ee8d6c] to-[#c9401c]">
        <I><path d="M4 4l10 10M14 4L4 14" stroke="#fff" strokeWidth="2.400" /></I>
      </button>
    </div>
    <div className="mx-[2px] mb-[2px] flex h-[328px] border border-[#24479c] bg-[#ebe9ed] pl-[5px]">
      <div className="w-[226px] shrink-0 pt-[5px]">
        <div role="tablist" className="flex h-[21px] items-end pl-[2px]">
          <button role="tab" className="h-[19px] w-[63px] rounded-t-xs border border-b-0 border-[#8ba0bf] bg-linear-to-b from-white to-[#c6d3e8]">Обычные</button>
          <button role="tab" className="relative -mb-px flex h-[22px] w-[59px] items-center justify-center rounded-t-xs border border-t-2 border-b-0 border-[#8ba0bf] border-t-[#f0a030] bg-[#fbfbfe]">
            <span className="border border-dotted border-black px-[4px]">Спектр</span>
          </button>
        </div>
        <div className="h-[291px] border border-[#8ba0bf] bg-[#fbfbfe] px-[8px] pt-[9px]">
          <p className="leading-[16px]"><Hot t="Ц_вета:" /></p>
          <div className="mt-px flex h-[139px] pl-px">
            <div className="relative flex w-[174px]">
              {columns.map((h, i) => (
                <i key={i} className="flex-1" style={{ background: `linear-gradient(hsl(${h} 100% 50%), #808080)` }} />
              ))}
              <svg width="19" height="19" viewBox="0 0 19 19" className="absolute top-[6px] left-[4px]">
                <path d="M9.500 0v5M9.500 14v5M0 9.500h5M14 9.500h5" stroke="#fff" strokeWidth="3" />
              </svg>
            </div>
            <div className="mt-[4px] mb-[2px] ml-[9px] w-[12px] bg-linear-to-b from-white via-[#f97812] to-black" />
            <svg width="7" height="10" viewBox="0 0 7 10" className="mt-[22px] ml-[3px]"><path d="M7 0v10L0 5z" /></svg>
          </div>
          <div className="mt-[5px] flex items-center">
            <label htmlFor="model" className="w-[103px] whitespace-nowrap"><Hot t="_Цветовая модель:" /></label>
            <div className="relative h-[22px] w-[89px] border border-[#9c9ba5] bg-white">
              <select id="model" className="h-full w-full appearance-none bg-transparent px-[2px]">
                <option>RGB</option>
              </select>
              <span className="pointer-events-none absolute top-px right-px flex h-[18px] w-[16px] items-center justify-center rounded-xs border border-[#8fabd0] bg-linear-to-b from-[#f2f8ff] to-[#adc6e8]">
                <Chevron />
              </span>
            </div>
          </div>
          <div className="mt-[3px] flex flex-col gap-[3px]">
            {channels.map(([id, t, v]) => (
              <div key={id} className="flex h-[20px]">
                <label htmlFor={id} className="w-[103px] leading-[16px]"><Hot t={t} /></label>
                <div className="flex w-[47px] items-center border border-[#9c9ba5] bg-white pr-px">
                  <input id={id} defaultValue={v} className="min-w-0 flex-1 px-[2px]" />
                  <div className="flex flex-col">
                    {['M3 0l3 3H0z', 'M0 0h6L3 3z'].map((d) => (
                      <button key={d} aria-label="Изменить" className="flex h-[8px] w-[15px] items-center justify-center rounded-xs border border-[#9db4d6] bg-linear-to-b from-[#f4f9ff] to-[#b9cdea]">
                        <svg width="6" height="3" viewBox="0 0 6 3"><path d={d} fill="#44557a" /></svg>
                      </button>
                    ))}
                  </div>
                </div>
              </div>
            ))}
          </div>
        </div>
      </div>
      <div className="relative flex flex-1 flex-col items-center pt-[5px] pr-[6px] pl-[11px]">
        <button className={dialogButton + ' border-2 border-[#2f5cb4]'}>ОК</button>
        <button className={dialogButton + ' mt-[8px] border border-[#2c4d86]'}>Отмена</button>
        <p className="mt-auto leading-[16px]">Новый</p>
        <div className="mt-[3px] mb-[7px] h-[49px] w-[49px] border border-black bg-[#facca7]" />
        <p className="pb-[4px] leading-[16px]">Текущий</p>
        <svg width="10" height="10" viewBox="0 0 10 10" className="absolute right-0 bottom-0"><path d="M0 10L10 0M4 10l6-6M8 10l2-2" stroke="#8d8c98" strokeWidth="1.400" /></svg>
      </div>
    </div>
  </section>
);

/* ---------- status bar and taskbar ---------- */

const cell = 'flex h-[17px] w-[150px] items-center justify-center border border-[#bdbcc2] pt-[3px] whitespace-nowrap';

const StatusBar = () => (
  <footer className="flex h-[23px] shrink-0 items-center gap-[5px] pt-px pr-[21px] pl-[3px] leading-[14px]">
    <span className={cell + ' pr-[28px]'}>Ширина = 65 мм</span>
    <span className={cell}>Высота = 44,687 мм</span>
    <span className={cell}>Угол = 0 град</span>
    <span className={cell} />
    <span className="ml-auto flex h-[17px] w-[100px] items-center justify-center border border-[#bdbcc2] pt-[3px]">Стр. 7/7</span>
  </footer>
);

const tasks: [React.ReactNode, string, boolean][] = [
  [<FolderIcon />, 'D:\\2008\\для програ...', false],
  [<WordIcon />, '1.doc - Microsoft Word', false],
  [<WordIcon />, '2.doc - Microsoft Word', false],
  [<WordIcon />, 'текст на печать.doc...', false],
  [<VisioIcon />, 'упражнение первое...', true],
  [<VisioIcon />, 'Документ3 - Microso...', false],
  [<PaintIcon />, 'Безымянный - Paint', false],
];

const Taskbar = () => (
  <div className="flex h-[30px] shrink-0 border-t border-[#2a4fa8] bg-linear-to-b from-[#8cc0f4] via-[#3f7cd2] to-[#2a50ae]">
    <button className="flex w-[88px] items-center gap-px rounded-r-lg bg-linear-to-b from-[#6cc46a] via-[#2f9a34] to-[#218228] pl-[10px] font-['Liberation_Sans',sans-serif] text-[17px] font-bold text-white italic [text-shadow:1px_1px_1px_#11491a]">
      <svg width="15" height="16" viewBox="0 0 15 16">
        <path d="M3 2q3-2 5 0L7 7Q4 6 2 7z" fill="#f0592b" /><path d="M9 3q3 1 5 0l-1 5q-3 1-5 0z" fill="#8bd94e" />
        <path d="M2 8q3-1 5 0l-1 5q-3-2-5 0z" fill="#5a9bf2" /><path d="M8 9q2 1 5 0l-1 5q-3 1-5 0z" fill="#fbd344" />
      </svg>
      пуск
    </button>
    <div className="flex min-w-0 flex-1 gap-[3px] pt-[3px] pb-[3px] pl-[9px]">
      {tasks.map(([icon, t, on]) => (
        <button
          key={t}
          className={
            'flex w-[157px] min-w-0 items-center gap-[4px] overflow-hidden rounded-xs border pl-[9px] whitespace-nowrap text-white ' +
            (on
              ? 'border-[#0e2a6a] bg-linear-to-b from-[#123378] to-[#1c4794]'
              : 'border-[#2f62b8] bg-linear-to-b from-[#70adf0] via-[#4a88da] to-[#2f5cb8]')
          }
        >
          {icon}
          {t}
        </button>
      ))}
    </div>
    <div className="flex w-[112px] shrink-0 items-center bg-linear-to-b from-[#cfe2f8] via-[#9fc2ec] to-[#6f9cdc]">
      <button aria-label="Показать значки" className="-ml-[8px] flex h-[17px] w-[17px] items-center justify-center rounded-full border border-[#7f9cc9] bg-[#dce9f9]">
        <svg width="8" height="10" viewBox="0 0 10 10" fill="none" stroke="#2b4a86" strokeWidth="2"><path d="M7 1L3 5l4 4" /></svg>
      </button>
      <span className="ml-[3px] flex h-[15px] w-[15px] items-center justify-center rounded-full bg-[#24466b] text-[13px] leading-none font-bold text-white">a</span>
      <svg width="15" height="12" viewBox="0 0 15 12" className="ml-[3px]"><path d="M0 0h15v4H0z" fill="#fff" /><path d="M0 4h15v4H0z" fill="#2436c0" /><path d="M0 8h15v4H0z" fill="#d22222" /></svg>
      <span className="ml-[10px] font-['DejaVu_Sans',sans-serif] text-[16px] font-bold text-[#06107e]">00</span>
      <span className="ml-[2px] font-['DejaVu_Sans',sans-serif] text-[12px] leading-[11px] font-bold text-[#06107e]">
        28<br /><i className="block text-[10px] leading-[10px]">Ср</i>
      </span>
    </div>
  </div>
);

export default function App() {
  return (
    <div className="relative flex h-screen flex-col overflow-hidden bg-linear-to-r from-[#e9e7ed] to-[#fbfbfd] font-['DejaVu_Sans_Condensed','Noto_Sans',sans-serif] text-[11px] text-black">
      <TitleBar />
      <MenuBar />
      <StandardBar />
      <div className="h-px shrink-0" />
      <FormatBar />
      <div className="flex min-h-0 flex-1">
        <ShapesPane />
        <Work />
      </div>
      <StatusBar />
      <Taskbar />
      <ColorDialog />
    </div>
  );
}
